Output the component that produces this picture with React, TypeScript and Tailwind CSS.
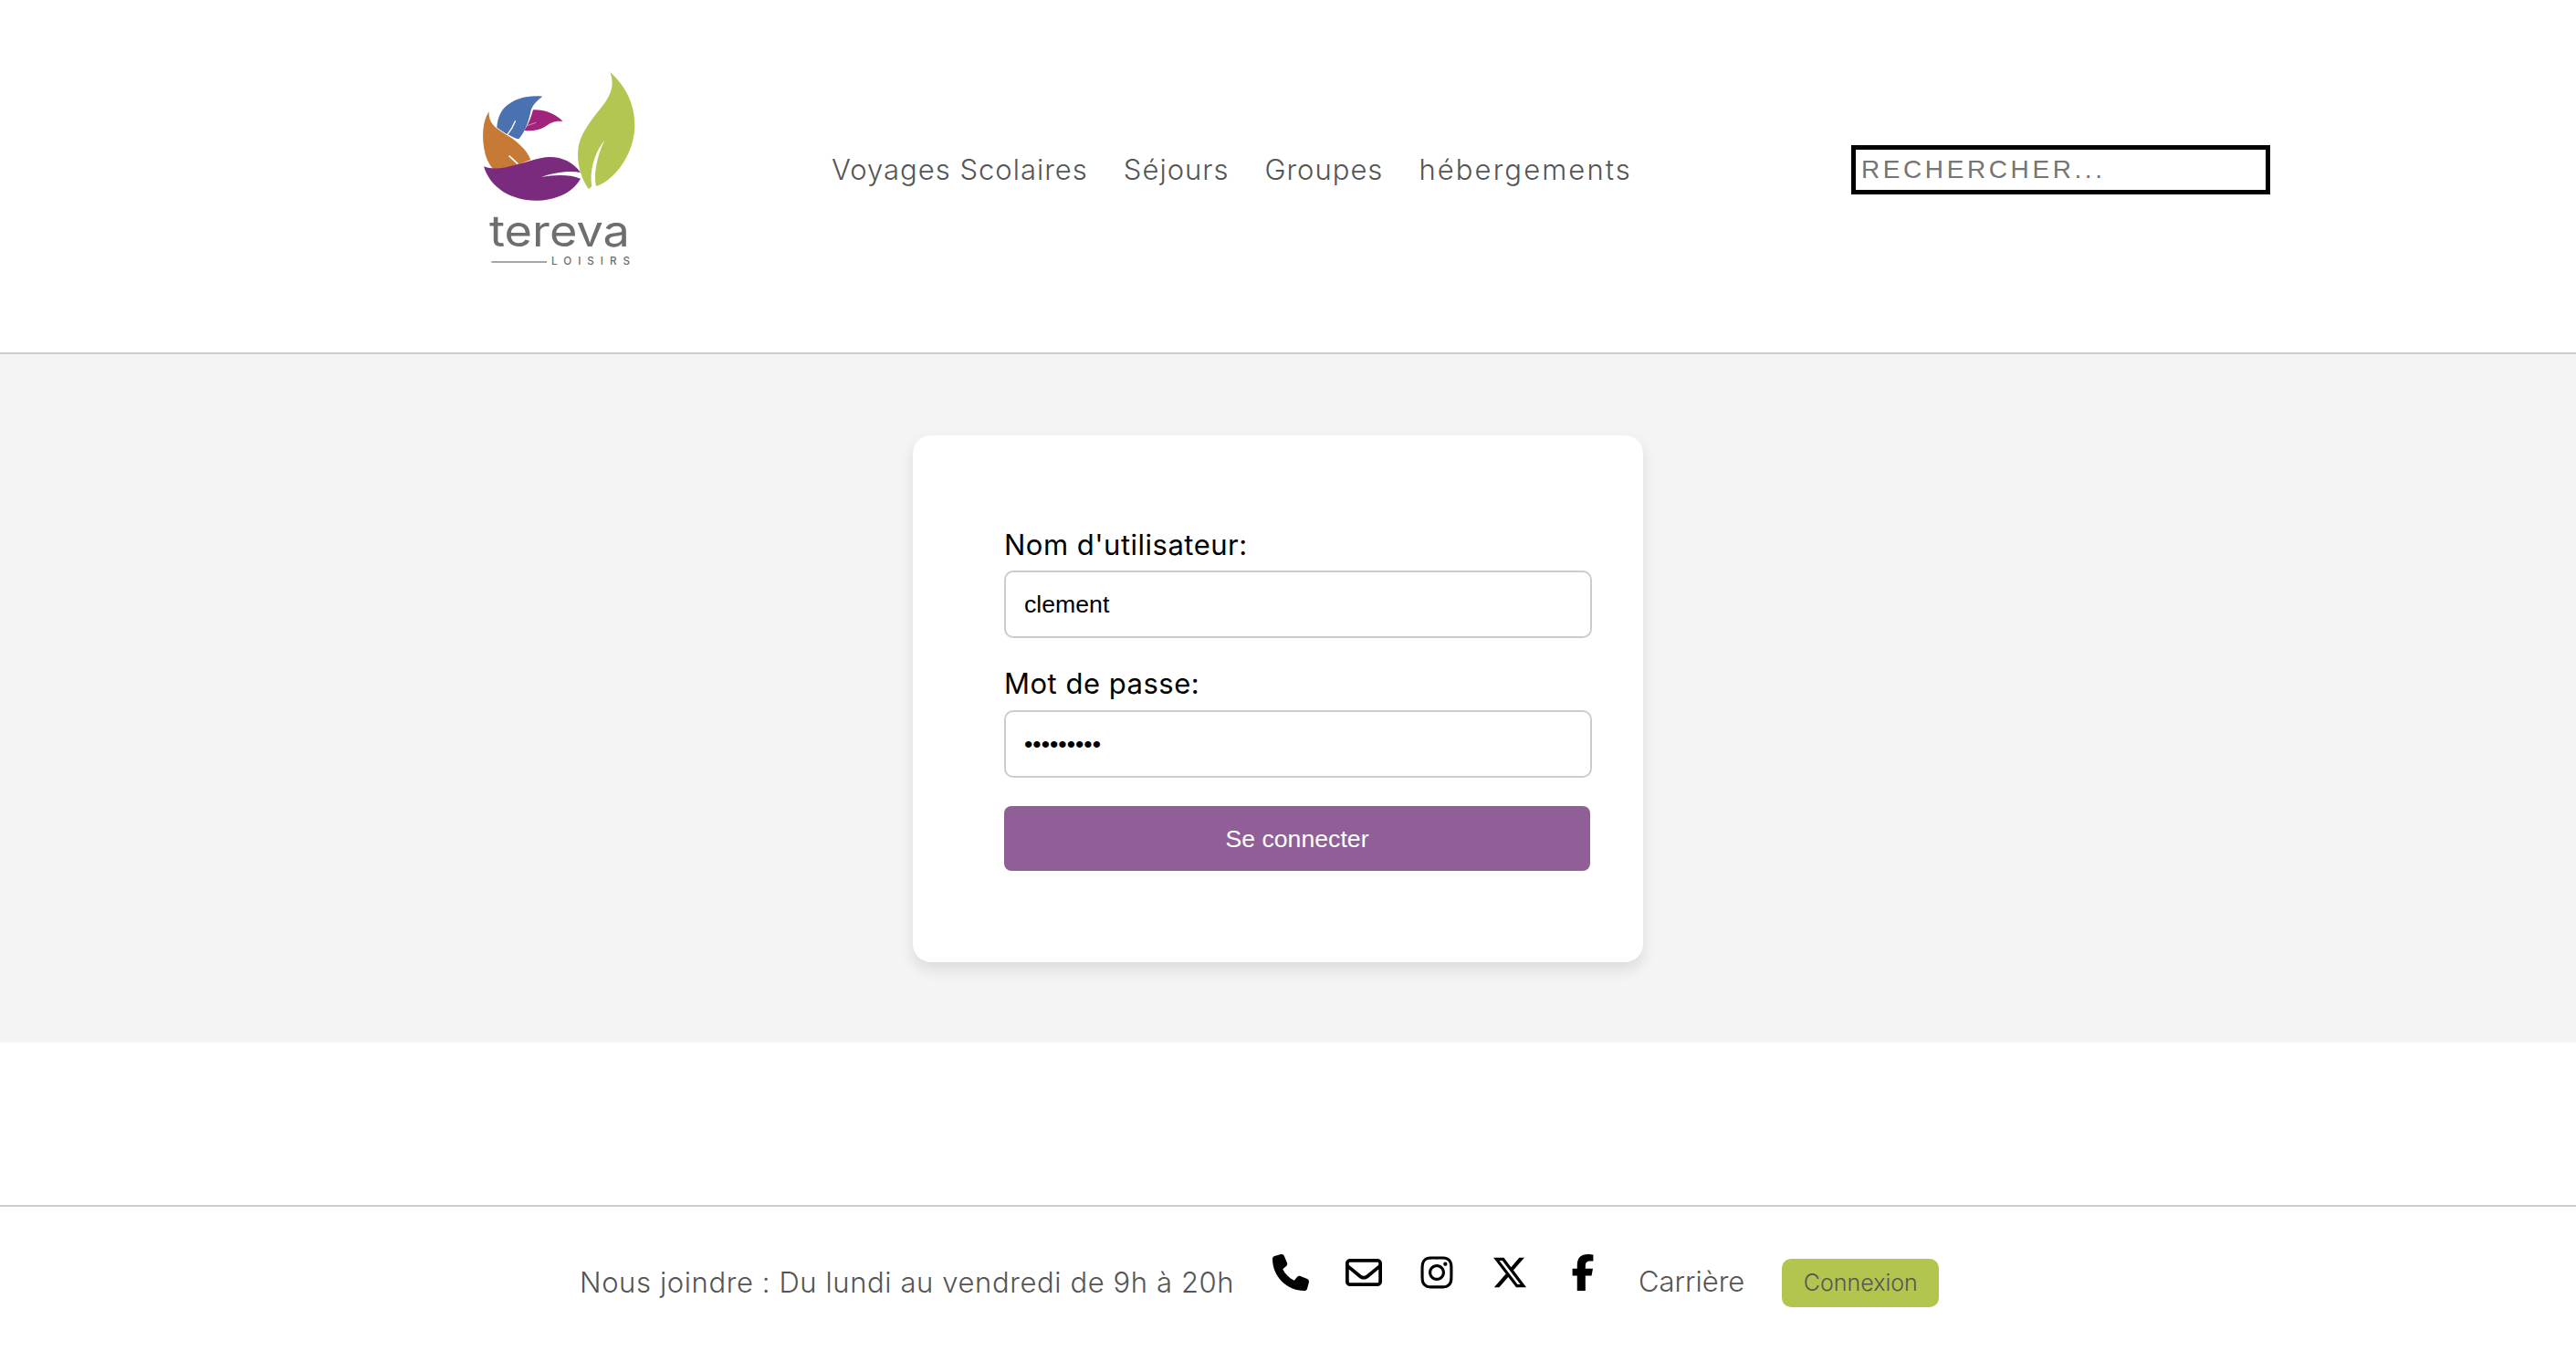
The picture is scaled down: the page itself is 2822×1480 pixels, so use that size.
import React from "react";
import { FaPhone, FaRegEnvelope, FaInstagram, FaXTwitter, FaFacebookF } from "react-icons/fa6";

function Logo() {
  return (
    <svg width="260" height="260" viewBox="0 0 780 780" className="block shrink-0">
      <path d="M565 90 C610 130 648 190 646 270 C644 350 590 440 520 465 C512 440 515 380 548 312 C510 360 497 420 505 465 L495 475 C470 440 455 390 460 345 C465 290 510 240 545 195 C570 160 580 130 565 90Z" fill="#b3c652" />
      <path d="M312 214 C345 212 385 225 410 252 C385 248 370 255 350 270 C330 282 305 285 283 282 C295 265 305 240 312 214Z" fill="#a3237c" />
      <path d="M292 266 L322 256" stroke="#e6c4dc" strokeWidth="2" fill="none" />
      <path d="M343 170 C300 165 250 175 220 205 C200 225 195 250 193 272 L222 292 C240 300 255 310 265 310 C290 280 300 240 305 215 C315 190 330 180 343 170Z" fill="#4b72b0" />
      <path d="M228 295 C240 280 250 260 254 250" stroke="#fff" strokeWidth="4" fill="none" />
      <path d="M167 220 C145 250 142 310 155 360 C162 385 175 405 188 414 C225 410 265 392 304 378 C290 340 250 310 215 290 C185 272 165 255 167 220Z" fill="#c77a35" />
      <path d="M233 365 L262 392" stroke="#fff" strokeWidth="5" fill="none" />
      <path d="M150 400 C200 420 260 390 340 372 C390 362 440 380 468 420 C430 412 380 420 338 435 C380 428 430 425 468 440 C440 490 380 512 320 512 C240 512 170 470 150 400Z" fill="#7a2b7d" />
      <path d="M175 714 H357" stroke="#8a8a8a" strokeWidth="4" />
      <text x="168" y="664" textLength="462" lengthAdjust="spacingAndGlyphs" fontFamily="Inter, sans-serif" fontSize="142" fontWeight="400" fill="#6d6e70">tereva</text>
      <text x="372" y="722" textLength="258" fontFamily="Inter, sans-serif" fontSize="35" fontWeight="500" fill="#6d6e70">LOISIRS</text>
    </svg>
  );
}

export default function App() {
  const nav = "text-[31px] leading-none text-[#555] whitespace-nowrap";
  return (
    <div className="w-[2822px] h-[1480px] flex flex-col bg-white overflow-hidden font-['Inter',sans-serif] font-light">
      <header className="h-[388px] shrink-0 flex items-center border-b-2 border-[#ccc] pl-[480px] pb-[15px]">
        <div className="-mt-[14px]"><Logo /></div>
        <nav className="ml-[171px] flex items-center gap-[39px]">
          <a className={`${nav} tracking-[1px]`}>Voyages Scolaires</a>
          <a className={`${nav} tracking-[1px]`}>Séjours</a>
          <a className={`${nav} tracking-[1px]`}>Groupes</a>
          <a className={`${nav} tracking-[2.1px]`}>hébergements</a>
        </nav>
        <input
          readOnly
          placeholder="RECHERCHER..."
          className="ml-[240px] w-[459px] h-[54px] border-[5px] border-black bg-white px-[6px] font-['Liberation_Sans',sans-serif] font-normal text-[28px] tracking-[3.6px] placeholder:text-[#757575] outline-none"
        />
      </header>

      <main className="h-[754px] shrink-0 bg-[#f4f4f4] pl-[1000px] pt-[89px]">
        <div className="w-[800px] h-[577px] rounded-[20px] bg-white shadow-[0_8px_16px_rgba(0,0,0,0.1)] pl-[100px] pt-[100px]">
          <label className="block text-[31px] tracking-[0.5px] leading-[36px] text-black mt-[2px] mb-[10px] font-normal">Nom d'utilisateur:</label>
          <input
            readOnly
            value="clement"
            className="block w-[644px] h-[74px] border-2 border-[#ccc] rounded-[10px] px-[20px] font-['Liberation_Sans',sans-serif] font-normal text-[26.67px] text-black outline-none"
          />
          <label className="block text-[31px] tracking-[0.5px] leading-[36px] text-black mt-[32px] mb-[11px] font-normal">Mot de passe:</label>
          <input
            readOnly
            type="password"
            value="abcdefghi"
            className="block w-[644px] h-[74px] border-2 border-[#ccc] rounded-[10px] px-[20px] font-['Liberation_Sans',sans-serif] font-normal text-[26.67px] text-black outline-none"
          />
          <button className="block mt-[31px] w-[642px] h-[71px] rounded-[8px] bg-[#915f97] text-white font-['Liberation_Sans',sans-serif] font-normal text-[26.67px]">Se connecter</button>
        </div>
      </main>

      <div className="h-[178px] shrink-0 bg-white" />

      <footer className="flex-1 border-t-2 border-[#ccc] flex items-start pl-[635px] pt-[52px] text-[#555]">
        <span className="text-[31px] tracking-[0.6px] leading-none whitespace-nowrap w-[759px] mt-[15px]">Nous joindre : Du lundi au vendredi de 9h à 20h</span>
        <FaPhone className="w-[40px] h-[40px] text-black" />
        <FaRegEnvelope className="ml-[40px] w-[40px] h-[40px] text-black" />
        <FaInstagram className="ml-[40px] w-[40px] h-[40px] text-black" />
        <FaXTwitter className="ml-[40px] w-[40px] h-[40px] text-black" />
        <FaFacebookF className="ml-[40px] w-[40px] h-[40px] text-black" />
        <span className="ml-[41px] text-[31px] leading-none mt-[14px]">Carrière</span>
        <button className="ml-[41px] mt-[5px] w-[172px] h-[53px] rounded-[10px] bg-[#b3c44f] text-[25px] text-[#555] font-light">Connexion</button>
      </footer>
    </div>
  );
}
